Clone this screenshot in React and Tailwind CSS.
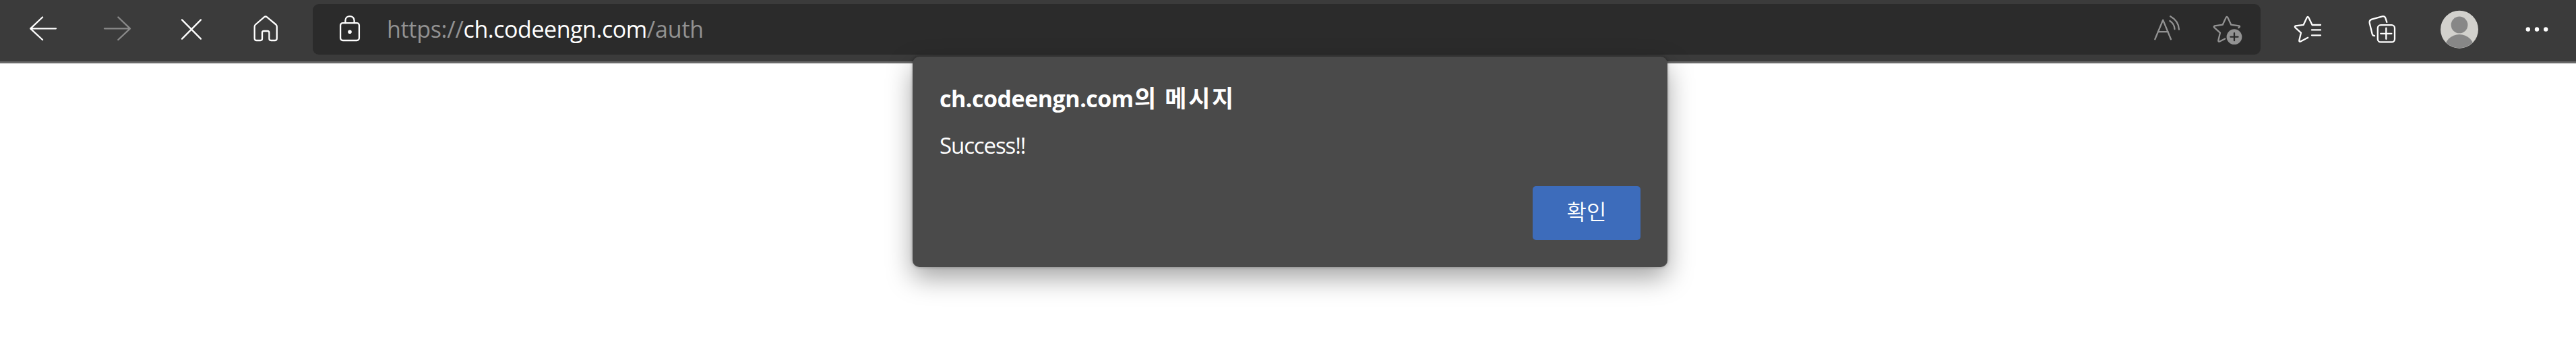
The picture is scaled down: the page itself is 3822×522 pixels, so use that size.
function Icon({ children, className = 'text-white' }) {
  return (
    <svg
      viewBox="-30 -30 60 60"
      className={`h-[60px] w-[60px] shrink-0 ${className}`}
      fill="none"
      stroke="currentColor"
      strokeWidth="2.3"
      strokeLinecap="round"
      strokeLinejoin="round"
    >
      {children}
    </svg>
  );
}

function ToolButton({ label, width = 'w-[110px]', children }) {
  return (
    <button aria-label={label} className={`flex h-[84px] shrink-0 items-center justify-center ${width}`}>
      {children}
    </button>
  );
}

function AddressBar() {
  return (
    <div className="mt-[6px] ml-[15px] flex h-[75px] w-[2890px] shrink-0 rounded-[9px] bg-[#2b2b2b]">
      <div className="flex h-[72px] grow items-center pl-[25px]">
        <Icon>
          <rect x="-13.9" y="-7.9" width="27.8" height="25.9" rx="3.5" />
          <path d="M-6.6 -8V-11.5C-6.6 -20 6.6 -20 6.6 -11.5V-8" />
          <circle cx="0" cy="5.2" r="2.8" fill="currentColor" stroke="none" />
        </Icon>
        <div className="ml-[25px] flex pt-px text-[34px] leading-[48px] whitespace-pre text-[#929292]">
          <span className="tracking-[-0.3px]">https://</span>
          <span className="tracking-[-0.46px] text-white">ch.codeengn.com</span>
          <span className="tracking-[-0.2px]">/auth</span>
        </div>
      </div>
      <div className="flex h-[72px] items-center gap-[30px] pr-[20px]">
        <Icon className="text-[#929292]">
          <path d="M-16.7 16.2L-4.8 -12.4L7 16.2M-12.3 5.2H2.8" />
          <path d="M5.4 -11Q12 -7 12.5 1M6.2 -17.8Q18.5 -11 19 1.7" />
        </Icon>
        <Icon className="text-[#929292]">
          <path d="M17.4 -0.9L18.6 -1.8Q19.8 -3.2 18 -3.7L6.3 -5.3L1.3 -16Q0 -18.2 -1.3 -16L-6.3 -5.3L-18 -3.6Q-20 -2.8 -18.6 -1.2L-10 6.6L-12.7 18Q-12.8 20.2 -10.6 19.5L-2.8 15.5" />
          <circle cx="11" cy="12.7" r="11.4" fill="currentColor" stroke="none" />
          <path d="M11 7.2V18.2M5.5 12.7H16.5" className="stroke-[#2b2b2b]" />
        </Icon>
      </div>
    </div>
  );
}

function Toolbar() {
  return (
    <header className="flex h-[94px] border-b-[3px] border-[#696969] bg-[#3b3b3b] pl-[9px]">
      <ToolButton label="Back">
        <Icon><path d="M19 0.3H-18.6M-0.9 -16.5L-18.8 0.3L-0.9 17" /></Icon>
      </ToolButton>
      <ToolButton label="Forward">
        <Icon className="text-[#8a8a8a]"><path d="M-19 0.3H18.6M1.3 -16.5L19 0.3L1.3 17" /></Icon>
      </ToolButton>
      <ToolButton label="Stop">
        <Icon><path d="M-14 -12.6L14 15.6M14 -12.6L-14 15.6" /></Icon>
      </ToolButton>
      <ToolButton label="Home">
        <Icon>
          <path d="M-1.8 -16.8Q0 -18.3 1.8 -16.8L15.5 -5.5Q16.8 -4.3 16.8 -2.5V15Q16.8 18 13.8 18H8.2Q5.4 18 5.4 15.3V6.6Q5.4 4 3 4H-2.6Q-5 4 -5 6.6V15.3Q-5 18 -7.8 18H-13.3Q-16.3 18 -16.3 15V-2.5Q-16.3 -4.3 -15 -5.5Z" />
        </Icon>
      </ToolButton>
      <AddressBar />
      <div className="ml-[15px] flex">
        <ToolButton label="Favorites">
          <Icon>
            <path d="M19 -5H6.6L1.3 -16Q0 -18.2 -1.3 -16L-6.3 -5.2L-18 -3.6Q-20 -2.8 -18.6 -1.2L-10 6.6L-12.7 18Q-12.8 20.2 -10.6 19.5L0.2 13.8" />
            <path d="M6 2.4H19M6 10.3H19" />
          </Icon>
        </ToolButton>
        <ToolButton label="Collections">
          <Icon>
            <rect x="-6.2" y="-4.8" width="25.2" height="25.2" rx="4.5" />
            <path d="M6.3 -0.3V15.8M-1.8 7.8H14.4" />
            <path d="M-10.9 11.2Q-13.6 11.2 -14.4 8.2L-18.3 -8Q-19 -12 -15 -13.4L0.5 -17.7Q4 -18.3 5.3 -15.4L7.3 -9.2" />
          </Icon>
        </ToolButton>
        <ToolButton label="Profile" width="w-[120px]">
          <Icon>
            <clipPath id="avatar"><circle cx="0" cy="1.7" r="27.6" /></clipPath>
            <circle cx="0" cy="1.7" r="28" fill="#d2d1cd" stroke="none" />
            <g clipPath="url(#avatar)" fill="#878787" stroke="none">
              <circle cx="0" cy="-5.1" r="12.4" />
              <circle cx="0" cy="31.4" r="22.4" />
            </g>
          </Icon>
        </ToolButton>
        <ToolButton label="More">
          <Icon>
            <g fill="currentColor" stroke="none">
              <circle cx="-13.2" cy="1.5" r="3.2" />
              <circle cx="0" cy="1.5" r="3.2" />
              <circle cx="13.2" cy="1.5" r="3.2" />
            </g>
          </Icon>
        </ToolButton>
      </div>
    </header>
  );
}

function AlertDialog() {
  return (
    <section
      role="alertdialog"
      className="absolute top-[84px] left-[1354px] flex h-[312px] w-[1120px] flex-col rounded-[10px] bg-[#4a4a4a] px-[40px] pb-[40px] text-white shadow-[0_16px_38px_rgba(0,0,0,0.36),0_0_5px_rgba(0,0,0,0.3)]"
    >
      <h1 className="mt-[35px] flex h-[50px] items-baseline text-[34px] leading-[50px] font-bold whitespace-pre">
        <span className="w-[289px] tracking-[-0.5px]">ch.codeengn.com</span>
        <span className="font-['Noto_Sans_CJK_KR',sans-serif] text-[35px] tracking-[2.6px]">의 메시지</span>
      </h1>
      <p className="mt-[23px] text-[33px] leading-[48px] tracking-[-1.1px]">Success!!</p>
      <button className="mt-auto h-[80px] w-[160px] self-end rounded-[5px] bg-[#3d6cbb] pb-[8px] font-['Noto_Sans_CJK_KR',sans-serif] text-[32px] leading-[68px] font-[350]">
        확인
      </button>
    </section>
  );
}

export default function App() {
  return (
    <div className="relative h-[522px] w-[3822px] overflow-hidden bg-white font-['Open_Sans','Noto_Sans_CJK_KR',sans-serif]">
      <Toolbar />
      <AlertDialog />
    </div>
  );
}
